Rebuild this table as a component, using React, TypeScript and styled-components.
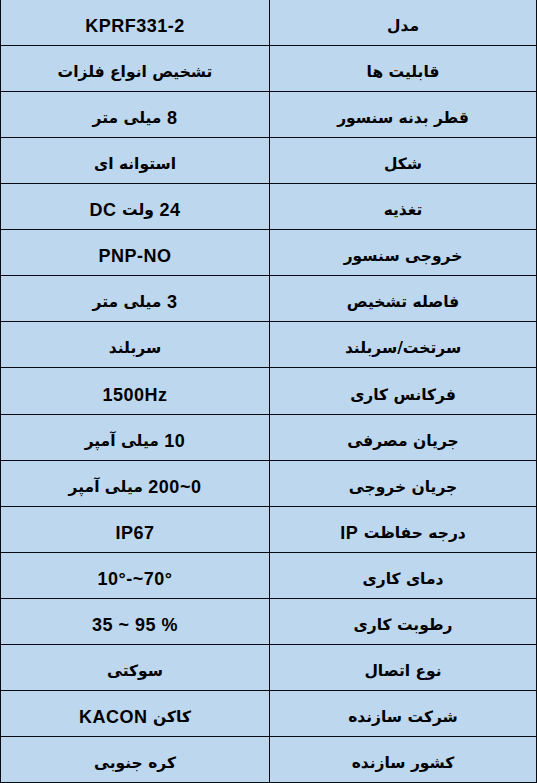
import React from 'react'
import styled, { createGlobalStyle } from 'styled-components'

const GlobalStyle = createGlobalStyle`
  html, body {
    margin: 0;
    padding: 0;
    background: #bdd7ee;
  }
`

type Row = { label: string; value: string; ltr?: boolean }

const rows: Row[] = [
  { label: 'مدل', value: 'KPRF331-2' },
  { label: 'قابلیت ها', value: 'تشخیص انواع فلزات' },
  { label: 'قطر بدنه سنسور', value: '8 میلی متر' },
  { label: 'شکل', value: 'استوانه ای' },
  { label: 'تغذیه', value: '24 ولت DC' },
  { label: 'خروجی سنسور', value: 'PNP-NO' },
  { label: 'فاصله تشخیص', value: '3 میلی متر' },
  { label: 'سرتخت/سربلند', value: 'سربلند' },
  { label: 'فرکانس کاری', value: '1500Hz' },
  { label: 'جریان مصرفی', value: '10 میلی آمپر' },
  { label: 'جریان خروجی', value: '0~200 میلی آمپر' },
  { label: 'درجه حفاظت IP', value: 'IP67' },
  { label: 'دمای کاری', value: '10°-~70°', ltr: true },
  { label: 'رطوبت کاری', value: '35 ~ 95 %', ltr: true },
  { label: 'نوع اتصال', value: 'سوکتی' },
  { label: 'شرکت سازنده', value: 'کاکن KACON' },
  { label: 'کشور سازنده', value: 'کره جنوبی' },
]

// split persian words from latin ones so each gets its own size
const persian = /([\u0600-\u06FF\u200c]+(?:[ /]+[\u0600-\u06FF\u200c]+)*)/

function Texto({ s }: { s: string }) {
  const partes = s.split(persian).filter(p => p !== '')
  return (
    <>
      {partes.map((p, i) =>
        persian.test(p) ? <Fa key={i}>{p}</Fa> : <En key={i}>{p}</En>
      )}
    </>
  )
}

export default function App() {
  return (
    <>
      <GlobalStyle />
      <Tabela dir="rtl">
        {rows.map((r, i) => (
          <React.Fragment key={i}>
            <Celula lado="direita">
              <Texto s={r.label} />
            </Celula>
            <Celula lado="esquerda">
              {r.ltr ? (
                <Ltr dir="ltr">
                  <En>{r.value}</En>
                </Ltr>
              ) : (
                <Texto s={r.value} />
              )}
            </Celula>
          </React.Fragment>
        ))}
      </Tabela>
    </>
  )
}

const Tabela = styled.div`
  display: grid;
  grid-template-columns: 268px 269px;
  grid-template-rows: repeat(17, 1fr);
  width: 537px;
  height: 783px;
  background: #bdd7ee;
`

const Celula = styled.div<{ lado: 'direita' | 'esquerda' }>`
  display: flex;
  align-items: flex-end;
  justify-content: center;
  box-sizing: border-box;
  padding-bottom: 9px;
  border-bottom: 1px solid #0a0a14;
  border-left: 1px solid #0a0a14;
  border-right: ${props => (props.lado === 'direita' ? '1px solid #0a0a14' : 'none')};
  font-family: 'Liberation Sans', 'DejaVu Sans', sans-serif;
  font-weight: bold;
  font-size: 18px;
  line-height: 20px;
  color: #000;
  white-space: pre;
`

const Fa = styled.span`
  font-family: 'DejaVu Sans', sans-serif;
  font-size: 15.5px;
`

const En = styled.span`
  font-family: 'Liberation Sans', Arial, sans-serif;
  font-size: 18px;
  letter-spacing: 0.5px;
`

const Ltr = styled.span`
  unicode-bidi: isolate;
  direction: ltr;
`
